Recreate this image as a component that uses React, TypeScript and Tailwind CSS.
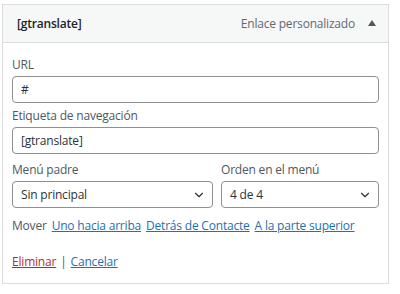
import { ChevronDown } from "lucide-react";

const font = { fontFamily: '"Open Sans", "Noto Sans", sans-serif', letterSpacing: "-0.2px" };

function Field({ label, value }: { label: string; value: string }) {
  return (
    <div className="flex flex-col">
      <span className="h-[20px] whitespace-nowrap leading-[20px] text-[12px] text-[#50575e]">{label}</span>
      <div className="mt-[1px] flex h-[27px] items-center rounded-[4px] border border-[#8c8f94] bg-white px-[8px] text-[12px] text-[#2c3338]">
        {value}
      </div>
    </div>
  );
}

function SelectField({ label, value, className }: { label: string; value: string; className: string }) {
  return (
    <div className={`flex flex-col ${className}`}>
      <span className="h-[20px] whitespace-nowrap leading-[20px] text-[12px] text-[#50575e]">{label}</span>
      <div className="mt-[1px] flex h-[27px] items-center justify-between rounded-[4px] border border-[#8c8f94] bg-white pl-[8px] pr-[6px] text-[12px] text-[#2c3338]">
        <span>{value}</span>
        <ChevronDown size={14} strokeWidth={2} className="text-[#2c3338]" />
      </div>
    </div>
  );
}

export default function App() {
  return (
    <div className="h-[294px] w-[400px] bg-white pl-[2px] pt-[4px]" style={font}>
      <div className="w-[387px] border border-[#dcdcde] bg-white">
        <div className="flex h-[38px] items-center justify-between border-b border-[#dcdcde] bg-[#f6f7f7] pl-[14px] pr-[11px]">
          <span className="text-[12px] font-semibold text-[#1d2327]">[gtranslate]</span>
          <div className="flex items-center gap-[10px]">
            <span className="text-[12px] text-[#646970]">Enlace personalizado</span>
            <svg width="10" height="8" viewBox="0 0 10 8" className="mb-[1px] ml-[2px]">
              <path d="M5 1 L9 7 L1 7 Z" fill="#50575e" />
            </svg>
          </div>
        </div>
        <div className="flex flex-col px-[9px] pb-[11px] pt-[12px]">
          <Field label="URL" value="#" />
          <div className="mt-[3px]">
            <Field label="Etiqueta de navegación" value="[gtranslate]" />
          </div>
          <div className="mt-[6px] flex gap-[8px]">
            <SelectField label="Menú padre" value="Sin principal" className="w-[201px]" />
            <SelectField label="Orden en el menú" value="4 de 4" className="flex-1" />
          </div>
          <div className="mt-[8px] flex h-[20px] items-center gap-[5px] whitespace-nowrap text-[12px]">
            <span className="text-[#50575e]">Mover</span>
            <a href="#" className="text-[#2271b1] underline">Uno hacia arriba</a>
            <a href="#" className="text-[#2271b1] underline">Detrás de Contacte</a>
            <a href="#" className="text-[#2271b1] underline">A la parte superior</a>
          </div>
          <div className="mt-[16px] flex h-[20px] items-center text-[12px]">
            <a href="#" className="text-[#b32d2e] underline">Eliminar</a>
            <span className="mx-[4px] text-[#50575e]">|</span>
            <a href="#" className="text-[#2271b1] underline">Cancelar</a>
          </div>
        </div>
      </div>
    </div>
  );
}
